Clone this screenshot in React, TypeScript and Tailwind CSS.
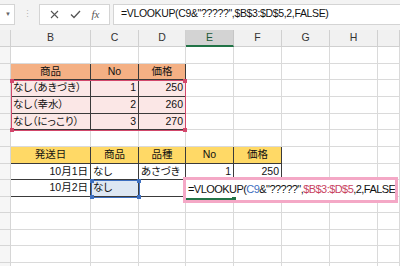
import React from "react";

const FONT = { fontFamily: '"Liberation Sans", "Noto Sans CJK JP", sans-serif' };

type Cell = { t?: string; a?: "l" | "c" | "r"; cls?: string };

// column header labels, widths match the grid template below
const HEAD = ["", "B", "C", "D", "E", "F", "G", "H", ""];

const GRID = "border-r border-b border-[#dadada]";
const T1H = "bg-[#f4b084] border-r border-b border-[#3a3a3a]";
const T1D = "bg-[#fbe7e6] border-r border-b border-[#3a3a3a]";
const T2H = "bg-[#ffd966] border-r border-b border-[#3a3a3a]";
const T2D = "bg-white border-r border-b border-[#3a3a3a]";

const rows: Cell[][] = [
  [],
  [{}, { t: "商品", a: "c", cls: T1H }, { t: "No", a: "c", cls: T1H }, { t: "価格", a: "c", cls: T1H }],
  [{}, { t: "なし（あきづき）", cls: T1D }, { t: "1", a: "r", cls: T1D }, { t: "250", a: "r", cls: T1D }],
  [{}, { t: "なし（幸水）", cls: T1D }, { t: "2", a: "r", cls: T1D }, { t: "260", a: "r", cls: T1D }],
  [{}, { t: "なし（にっこり）", cls: T1D }, { t: "3", a: "r", cls: T1D }, { t: "270", a: "r", cls: T1D }],
  [],
  [
    {},
    { t: "発送日", a: "c", cls: T2H },
    { t: "商品", a: "c", cls: T2H },
    { t: "品種", a: "c", cls: T2H },
    { t: "No", a: "c", cls: T2H },
    { t: "価格", a: "c", cls: T2H },
  ],
  [
    {},
    { t: "10月1日", a: "r", cls: T2D },
    { t: "なし", cls: T2D },
    { t: "あさづき", cls: T2D },
    { t: "1", a: "r", cls: T2D },
    { t: "250", a: "r", cls: T2D },
  ],
  [
    {},
    { t: "10月2日", a: "r", cls: T2D },
    { t: "なし", cls: "bg-[#dde7f3] border-r border-b border-[#3a3a3a]" },
    { cls: T2D },
    { cls: T2D },
    { cls: T2D },
  ],
  [],
  [],
  [],
  [],
  [],
];

// coloured range outline Excel draws while a formula is edited
function RefBox({ className, color }: { className: string; color: string }) {
  const dot = "absolute w-[4px] h-[4px]";
  return (
    <div className={`absolute border pointer-events-none ${className}`} style={{ borderColor: color }}>
      <span className={`${dot} -left-[2px] -top-[2px]`} style={{ background: color }} />
      <span className={`${dot} -right-[2px] -top-[2px]`} style={{ background: color }} />
      <span className={`${dot} -left-[2px] -bottom-[2px]`} style={{ background: color }} />
      <span className={`${dot} -right-[2px] -bottom-[2px]`} style={{ background: color }} />
    </div>
  );
}

function Formula() {
  return (
    <>
      =VLOOKUP(<span className="text-[#3d6fc0]">C9</span>&"?????",
      <span className="text-[#c9435f]">$B$3:$D$5</span>,2,FALSE
    </>
  );
}

export default function App() {
  return (
    <div className="relative w-[400px] h-[266px] overflow-hidden bg-white text-[#111]" style={FONT}>
      {/* formula bar */}
      <div className="h-[30px] bg-[#f3f3f3] flex items-center gap-[3px] pb-[2px]">
        <div className="w-[15px] h-[21px] bg-white border-y border-r border-[#d4d4d4] flex items-center justify-end pr-[3px]">
          <span className="text-[6px] text-[#666]">▼</span>
        </div>
        <div className="w-[18px] flex justify-center text-[#b5b5b5] text-[9px] leading-none">⋮</div>
        <div className="w-[71px] h-[21px] bg-white border border-[#d4d4d4] flex items-center justify-around px-[4px]">
          <svg width="9" height="9" viewBox="0 0 9 9" stroke="#555" strokeWidth="1.1">
            <path d="M1 1L8 8M8 1L1 8" />
          </svg>
          <svg width="11" height="9" viewBox="0 0 11 9" fill="none" stroke="#555" strokeWidth="1.3">
            <path d="M1 4.5L4 7.5L10 1" />
          </svg>
          <span className="text-[11px] italic text-[#555]" style={{ fontFamily: '"Liberation Serif", serif' }}>
            fx
          </span>
        </div>
        <div className="flex-1 h-[21px] bg-white border-y border-l border-[#d4d4d4] flex items-center pl-[7px] text-[10.5px] tracking-[-0.35px] whitespace-nowrap">
          =VLOOKUP(C9&"?????",$B$3:$D$5,2,FALSE)
        </div>
      </div>

      {/* sheet */}
      <div className="grid grid-cols-[11px_80px_48px_47px_48px_48px_48px_48px_22px] grid-rows-[17px_17px_16px_17px_17px_16px_17px_17px_16px_17px_16px_17px_16px_17px_17px] text-[10.5px] [font-feature-settings:'palt']">
        {HEAD.map((h, i) => (
          <div
            key={"h" + i}
            className={
              i === 4
                ? "bg-[#d3d3d3] border-r border-[#c6c6c6] border-b-2 border-b-[#217346] flex items-center justify-center text-[#1d5a38]"
                : "bg-[#f1f1f1] border-r border-b border-[#d0d0d0] flex items-center justify-center text-[#333]"
            }
          >
            {h}
          </div>
        ))}
        {rows.map((r, ri) =>
          HEAD.map((_, ci) => {
            const c = r[ci] ?? {};
            const base = ci === 0 ? "bg-[#f6f6f6] border-r border-b border-[#d6d6d6]" : c.cls ?? GRID;
            const al = c.a === "c" ? "justify-center" : c.a === "r" ? "justify-end pr-[2px]" : "justify-start pl-[2px]";
            return (
              <div key={ri + "-" + ci} className={`${base} flex items-center ${al} whitespace-nowrap overflow-hidden`}>
                {c.t}
              </div>
            );
          })
        )}
      </div>

      <RefBox className="left-[11px] top-[80px] w-[175px] h-[51px]" color="#d2476b" />
      <RefBox className="left-[91px] top-[180px] w-[49px] h-[18px]" color="#3d6fc0" />

      {/* in-cell editor of E9 with pink annotation frame */}
      <div className="absolute left-[183px] top-[177px] w-[215px] h-[26px] border-[3px] border-[#f4a8c6] bg-white flex items-center pl-[2px] pb-[2px] text-[11px] tracking-[-0.55px] whitespace-nowrap overflow-hidden">
        <Formula />
        <div className="absolute left-0 bottom-0 w-[48px] h-[2px] bg-[#217346]" />
        <div className="absolute left-[46px] -bottom-[1px] w-[4px] h-[4px] bg-[#217346]" />
      </div>
    </div>
  );
}
